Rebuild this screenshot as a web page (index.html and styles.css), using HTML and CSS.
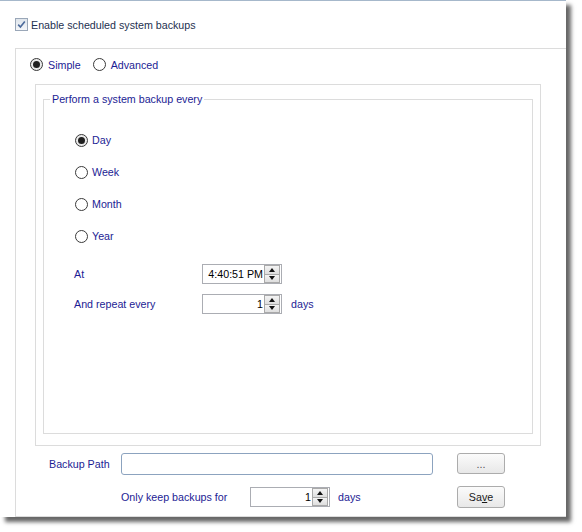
FILE: index.html
```html
<!DOCTYPE html>
<html>
<head>
<meta charset="utf-8">
<title>Scheduled system backups</title>
<link rel="stylesheet" href="styles.css">
</head>
<body>
<div class="window">
  <div class="header">
    <label class="check">
      <span class="checkbox"><svg viewBox="0 0 11 11" width="11" height="11"><path d="M2.2 5.6 L4.4 8 L8.8 2.4" fill="none" stroke="#4b6a9b" stroke-width="1.6"/></svg></span>
      <span class="check-text">Enable scheduled system backups</span>
    </label>
  </div>
  <div class="panel">
    <div class="mode-row">
      <label class="opt"><span class="radio on"></span>Simple</label>
      <label class="opt"><span class="radio"></span>Advanced</label>
    </div>
    <div class="group">
      <fieldset class="freq">
        <legend>Perform a system backup every</legend>
        <div class="periods">
          <label class="period"><span class="radio on"></span>Day</label>
          <label class="period"><span class="radio"></span>Week</label>
          <label class="period"><span class="radio"></span>Month</label>
          <label class="period"><span class="radio"></span>Year</label>
        </div>
        <div class="field-row first">
          <span class="field-label">At</span>
          <div class="spinner">
            <span class="spin-value">4:40:51 PM</span>
            <span class="spin-btns"><span class="spin-up"></span><span class="spin-down"></span></span>
          </div>
        </div>
        <div class="field-row">
          <span class="field-label">And repeat every</span>
          <div class="spinner">
            <span class="spin-value">1</span>
            <span class="spin-btns"><span class="spin-up"></span><span class="spin-down"></span></span>
          </div>
          <span class="unit">days</span>
        </div>
      </fieldset>
    </div>
    <div class="footer">
      <span class="foot-label">Backup Path</span>
      <input class="path-input" type="text" value="">
      <button class="btn browse">...</button>
      <div class="keep">
        <span class="keep-label">Only keep backups for</span>
        <div class="spinner">
          <span class="spin-value">1</span>
          <span class="spin-btns"><span class="spin-up"></span><span class="spin-down"></span></span>
        </div>
        <span class="unit keep-unit">days</span>
      </div>
      <button class="btn save">Sa<u>v</u>e</button>
    </div>
  </div>
</div>
</body>
</html>
```

FILE: styles.css
```css
body {
  margin: 0;
  min-height: 532px;
  background: #ffffff;
}

.window {
  width: 566px;
  height: 517px;
  box-sizing: border-box;
  border-top: 1px solid #a6b8cb;
  background: #ffffff;
  box-shadow: 5px 5px 4px rgba(0, 0, 0, 0.6);
  display: flex;
  flex-direction: column;
  font-family: "Liberation Sans", Arial, sans-serif;
  font-size: 10.7px;
  color: #1c1c94;
}

.header {
  height: 47px;
  box-sizing: border-box;
  padding: 17px 0 0 15px;
}

.check {
  display: flex;
  align-items: center;
  gap: 3px;
  height: 13px;
}

.checkbox {
  width: 13px;
  height: 13px;
  box-sizing: border-box;
  border: 1px solid #9aa7b8;
  background: linear-gradient(#dfe5ec, #f4f6f9);
  display: flex;
  align-items: center;
  justify-content: center;
}

.checkbox svg {
  display: block;
}

.check-text {
  color: #1e3150;
}

.panel {
  flex: 1;
  margin-left: 15px;
  border: 1px solid #dcdcdc;
  border-right: none;
  display: flex;
  flex-direction: column;
}

.mode-row {
  display: flex;
  gap: 12px;
  margin-top: 9px;
  padding-left: 14px;
  height: 13px;
}

.opt,
.period {
  display: flex;
  align-items: center;
  gap: 5px;
}

.radio {
  width: 13px;
  height: 13px;
  box-sizing: border-box;
  border: 1px solid #3a3a3a;
  border-radius: 50%;
  background: #ffffff;
  display: flex;
  align-items: center;
  justify-content: center;
  flex: none;
}

.radio.on {
  background: #e9e9e9;
}

.radio.on::after {
  content: "";
  width: 7px;
  height: 7px;
  border-radius: 50%;
  background: #1f1f1f;
}

.group {
  margin: 13px 0 0 19px;
  width: 506px;
  height: 362px;
  box-sizing: border-box;
  border: 1px solid #dcdcdc;
  padding: 0 7px 11px;
  display: flex;
  flex-direction: column;
}

.freq {
  flex: 1;
  margin: 8px 0 0 0;
  padding: 0;
  border: 1px solid #dcdcdc;
  min-width: 0;
}

.freq legend {
  margin-left: 6px;
  padding: 0 2px;
  line-height: 13px;
}

.periods {
  margin-top: 18px;
  padding-left: 31px;
  display: flex;
  flex-direction: column;
}

.period {
  height: 32px;
  gap: 4px;
}

.field-row {
  display: flex;
  align-items: center;
  height: 20px;
  padding-left: 30px;
  margin-top: 10px;
}

.field-row.first {
  margin-top: 12px;
}

.field-label {
  width: 128px;
  flex: none;
}

.spinner {
  width: 80px;
  height: 20px;
  box-sizing: border-box;
  border: 1px solid #abadb3;
  background: #ffffff;
  display: flex;
  align-items: stretch;
  flex: none;
}

.spin-value {
  flex: 1;
  text-align: right;
  padding-right: 1px;
  color: #000000;
  line-height: 18px;
}

.spin-btns {
  width: 16px;
  margin: 0 1px 0 0;
  display: flex;
  flex-direction: column;
}

.spin-up,
.spin-down {
  flex: 1;
  border: 1px solid #a9a9a9;
  background: linear-gradient(#f4f4f4, #dedede);
  display: flex;
  align-items: center;
  justify-content: center;
}

.spin-down {
  border-top: none;
}

.spin-up::after,
.spin-down::after {
  content: "";
  width: 0;
  height: 0;
  border-left: 3px solid transparent;
  border-right: 3px solid transparent;
}

.spin-up::after {
  border-bottom: 4px solid #111111;
}

.spin-down::after {
  border-top: 4px solid #111111;
}

.unit {
  margin-left: 9px;
}

.footer {
  margin: 7px 0 0 33px;
  display: grid;
  grid-template-columns: 72px 312px 24px 48px;
  grid-template-rows: 22px 22px;
  row-gap: 11px;
  align-items: center;
}

.foot-label {
  grid-column: 1;
}

.path-input {
  grid-column: 2;
  width: 312px;
  height: 22px;
  box-sizing: border-box;
  margin: 0;
  border: 1px solid #8ca3bf;
  border-radius: 3px;
  background: #ffffff;
  padding: 0 3px;
  font: inherit;
}

.btn {
  width: 48px;
  box-sizing: border-box;
  margin: 0;
  padding: 0;
  border: 1px solid #acacac;
  border-radius: 3px;
  background: linear-gradient(#fbfbfb, #e8e8e8);
  font-family: "Liberation Sans", Arial, sans-serif;
  font-size: 10.7px;
  color: #1a1a1a;
}

.browse {
  grid-column: 4;
  grid-row: 1;
  height: 21px;
  color: #555555;
  align-self: start;
}

.keep {
  grid-column: 2 / 4;
  grid-row: 2;
  display: flex;
  align-items: center;
}

.keep-label {
  width: 129px;
  flex: none;
}

.keep-unit {
  margin-left: 8px;
}

.save {
  grid-column: 4;
  grid-row: 2;
  height: 22px;
}
```
